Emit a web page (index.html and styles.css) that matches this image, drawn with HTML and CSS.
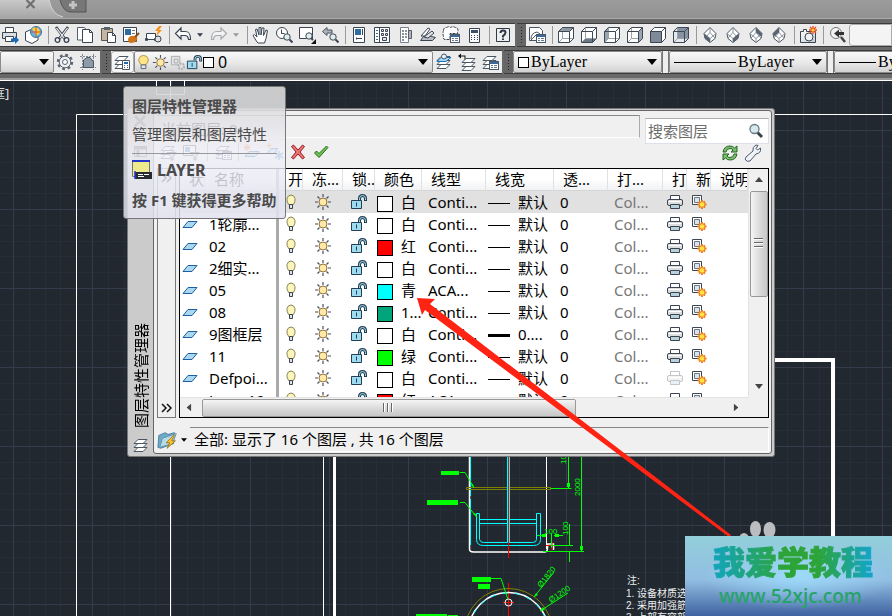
FILE: index.html
```html
<!DOCTYPE html>
<html lang="zh-CN">
<head>
<meta charset="utf-8">
<title>图层特性管理器</title>
<link rel="stylesheet" href="styles.css">
</head>
<body>
<svg class="sprite" aria-hidden="true">
  <defs>
    <linearGradient id="steel" x1="0" y1="0" x2="1" y2="1"><stop offset="0" stop-color="#fff"/><stop offset="1" stop-color="#c3c9d0"/></linearGradient>
    <g id="loupe"><circle cx="12" cy="11" r="3.2" fill="#dfeeed" stroke="#3d4855"/><path d="M14.5 13.5l3 3" stroke="#3d4855" stroke-width="2"/></g>
    <g id="sheets" fill="#fff" stroke="#4b5663"><path d="M2 15.500h9l4-4H6z"/><path d="M2 11.500h9l4-4H6z"/><path d="M2 7.500h9l4-4H6z"/></g>
    <g id="card"><rect x="8.500" y="8.500" width="9" height="8" fill="#fff" stroke="#4b5a6b"/><path d="M9 10h8" stroke="#3d6a9c" stroke-width="2"/><path d="M10 12.500h2m1 0h3m-6 2h2m1 0h3" stroke="#6b7a8a"/></g>
  </defs>
  <symbol id="i-plot" viewBox="0 0 18 18"><path d="M4.500 7V1.500h8V7" fill="#fff" stroke="#3a4452"/><path d="M1.500 6.500h14v6h-14z" fill="#dcdfe2" stroke="#3a4452"/><path d="M4.500 10.500h8v5h-8z" fill="#fff" stroke="#3a4452"/><path d="M10 12.500h4V10l4 4-4 4v-2.500h-4z" fill="#1769b5"/></symbol>
  <symbol id="i-globe" viewBox="0 0 18 18"><path d="M1.500 6L6 4l8 1v9l-6 3.500-6.500-3z" fill="#fff" stroke="#3a4452"/><circle cx="12" cy="6" r="5.500" fill="#63b8e8" stroke="#3a7298"/><path d="M8 3c4-4 8 0 8 4l-4 3c0-4-1-4-4-7z" fill="#f5d33c"/><path d="M12 1v10M7 6h10" stroke="#e04b20"/></symbol>
  <symbol id="i-cut" viewBox="0 0 18 18"><path d="M3 1l9 12M15 1L6 13" stroke="#3a4452" stroke-width="2.800"/><path d="M3.500 2l8 10.500M14.500 2l-8 10.500" stroke="#f5f6f7" stroke-width="1.200"/><circle cx="4.500" cy="14" r="2.300" fill="none" stroke="#3a4452" stroke-width="1.300"/><circle cx="13.500" cy="14" r="2.300" fill="none" stroke="#3a4452" stroke-width="1.300"/></symbol>
  <symbol id="i-copy" viewBox="0 0 18 18"><path d="M1.500 1.500H8L11 4v10H1.500z" fill="#fff" stroke="#555f6b"/><path d="M6.500 3.500h7l3 3v10h-10z" fill="#fff" stroke="#3a4452"/><path d="M13.500 3.500v3h3" fill="none" stroke="#3a4452"/></symbol>
  <symbol id="i-paste" viewBox="0 0 18 18"><path d="M2.500 2.500h11v12h-11z" fill="#c4b5a2" stroke="#5d5753"/><path d="M5 1h6v3H5z" fill="#59636f"/><path d="M8.500 6.500h5l3 3v7h-8z" fill="#fff" stroke="#3a4452"/><path d="M13.500 6.500v3h3" fill="none" stroke="#3a4452"/></symbol>
  <symbol id="i-match" viewBox="0 0 18 18"><path d="M1.500 1.500h13v14h-13z" fill="#fff" stroke="#3a4452"/><path d="M3 3h6v6H3z" fill="#2f6d9f"/><path d="M10 4.500h3M10 7.500h3" stroke="#777"/><path d="M6 13q2-4 6-3l3 1c1 3-2 6-6 6-2 0-3-2-3-4z" fill="#cf7417"/><path d="M13 11l4-4" stroke="#8b4c15" stroke-width="2"/></symbol>
  <symbol id="i-block" viewBox="0 0 18 18"><path d="M1.500 7.500h9v6h-9z" fill="#fff" stroke="#3a4452"/><path d="M0 13.500h3m6 0h3" stroke="#3a4452" stroke-width="2.500"/><circle cx="13" cy="13" r="3" fill="#dce0e4" stroke="#3a4452"/><path d="M14 0l-4 5h3l-2 5 6-6h-3l3-4z" fill="#f7921b"/></symbol>
  <symbol id="i-undo" viewBox="0 0 18 18"><path d="M1.500 7.500L7 2v3.500h4c4 0 5.500 2 5.500 8h-2c-.5-3-1-4-4-4H7V13z" fill="#fff" stroke="#3a4452" stroke-width="1.200"/></symbol>
  <symbol id="i-redo" viewBox="0 0 18 18"><path d="M16.500 7.500L11 2v3.500H7c-4 0-5.500 2-5.500 8h2c.5-3 1-4 4-4H11V13z" fill="#f4f4f4" stroke="#a6a9ad" stroke-width="1.200"/></symbol>
  <symbol id="i-hand" viewBox="0 0 18 18"><path d="M5 16L1 9.500 2.500 8.500 5 11 3.500 3.500 5 3l2 6V1.500h2V9l1-7h2l-.5 7.500L14 4l1.500.5-1.500 8L12.500 17H6z" fill="#fff" stroke="#3a4452"/></symbol>
  <symbol id="i-zoomrt" viewBox="0 0 18 18"><circle cx="7" cy="7" r="5.500" fill="#fff" stroke="#3a4452"/><path d="M6.500 3.500v4h3" fill="none" stroke="#3a4452"/><use href="#loupe"/></symbol>
  <symbol id="i-zoomwin" viewBox="0 0 18 18"><path d="M1.500 1.500h13v11h-13z" fill="#fff" stroke="#3a4452"/><circle cx="11" cy="10" r="3.200" fill="#dfeeed" stroke="#3d4855"/><path d="M13 12l2 2" stroke="#3d4855" stroke-width="2"/><path d="M18 13v5h-5z" fill="#111"/></symbol>
  <symbol id="i-zoomprev" viewBox="0 0 18 18"><path d="M1.500 5.500L6 1.500V4h5v3H6v2.500z" fill="#aeb4ba" stroke="#4b5560"/><use href="#loupe"/></symbol>
  <symbol id="i-props" viewBox="0 0 18 18"><path d="M3.500 1.500h11v15h-11z" fill="#fff" stroke="#3a4452"/><path d="M5 3h6v6H5z" fill="#2f6d9f"/><path d="M12.500 3v6M6 12.500h6m-5.500-1v2" stroke="#3a4452"/></symbol>
  <symbol id="i-dc" viewBox="0 0 18 18"><path d="M1.500 1.500h15v15h-15zM6.500 1.500v15" fill="#fff" stroke="#3a4452"/><path d="M3 4.500h2M3 7.500h2m-2 3h2m-2 3h2" stroke="#2f6d9f"/><path d="M8.500 3.500h2v2h-2zm4 0h2v2h-2zm-4 4h2v2h-2zm4 0h2v2h-2zm-3 4h4v3h-4z" fill="#dfe4e8" stroke="#3a4452"/></symbol>
  <symbol id="i-tp" viewBox="0 0 18 18"><path d="M4.500 1.500h8v15h-8z" fill="#fff" stroke="#7a838d"/><path d="M12.500 4.500h3v8h-3z" fill="#aeb4ba" stroke="#555f6b"/><path d="M6 5h2m1 0h2M6 8h2m1 0h2m-5 3h2m1 0h2m-5 3h2" stroke="#8a929b" stroke-width="2"/></symbol>
  <symbol id="i-ssm" viewBox="0 0 18 18"><path d="M1.500 14.500h12l3-3-4-1-8 0z" fill="#b6bcc2" stroke="#3a4452"/><path d="M2 10L9 2l2 1-5 7z" fill="#fff" stroke="#3a4452"/><path d="M5 11l8-6 2 2-6 5z" fill="#e5e7e9" stroke="#3a4452"/></symbol>
  <symbol id="i-markup" viewBox="0 0 18 18"><path d="M1.500 4.500q0-3 3-3 3-1.500 4 0 3-1.500 4.500 0 3 0 3 3-1 2 0 3H8v6H3q-2 0-1.500-3-1-3 0-6z" fill="#fff" stroke="#3a4452" stroke-dasharray="3 1"/><use href="#card"/></symbol>
  <symbol id="i-calc" viewBox="0 0 18 18"><path d="M4.500 2.500h10v14h-10z" fill="#fff" stroke="#3a4452"/><path d="M6 5.500h7" stroke="#3d5266" stroke-width="3"/><path d="M6 9.500h1m2 0h1m2 0h1M6 11.500h1m2 0h1m2 0h1M6 13.500h1m2 0h1m2 0h1" stroke="#3a4452"/></symbol>
  <symbol id="i-help" viewBox="0 0 18 18"><path d="M2.500 2.500h13v13h-13z" fill="#eceef0" stroke="#2f3945"/><path d="M6.500 7q0-2.500 2.500-2.500t2.500 2Q11.500 8 9 10v1.500m0 1V14" fill="none" stroke="#2f3945" stroke-width="2"/></symbol>
  <symbol id="i-view" viewBox="0 0 18 18"><path d="M1.500 1.500h10l3 3v10h-13z" fill="#fff" stroke="#4b5663"/><path d="M3 13q0-6 6-7l3 2M3 14l5-5" stroke="#4b5663" fill="none"/><use href="#card"/></symbol>
  <symbol id="i-cube" viewBox="0 0 18 18"><path d="M5.500 1.500v11h11m-11 0l-4 4" fill="none" stroke="#9aa2ab"/><path d="M1.500 5.500l4-4h11v11l-4 4h-11zM1.500 5.500h11v11m0-11l4-4" fill="none" stroke="#3f4956"/></symbol>
  <symbol id="i-top" viewBox="0 0 18 18"><path d="M1.500 5.500l4-4h11v11l-4 4h-11z" fill="#fff"/><path d="M1.500 5.500l4-4h11l-4 4z" fill="#8d98a5"/><use href="#i-cube"/></symbol>
  <symbol id="i-bottom" viewBox="0 0 18 18"><path d="M1.500 5.500l4-4h11v11l-4 4h-11z" fill="#fff"/><path d="M1.500 16.500l4-4h11l-4 4z" fill="#6d7885"/><use href="#i-cube"/></symbol>
  <symbol id="i-left" viewBox="0 0 18 18"><path d="M1.500 5.500l4-4h11v11l-4 4h-11z" fill="#fff"/><path d="M1.500 5.500l4-4v11l-4 4z" fill="#9aa4ae"/><use href="#i-cube"/></symbol>
  <symbol id="i-right" viewBox="0 0 18 18"><path d="M1.500 5.500l4-4h11v11l-4 4h-11z" fill="#fff"/><path d="M12.500 5.500l4-4v11l-4 4z" fill="#9aa4ae"/><use href="#i-cube"/></symbol>
  <symbol id="i-front" viewBox="0 0 18 18"><path d="M1.500 5.500l4-4h11v11l-4 4z" fill="#fff" stroke="#3a4452"/><path d="M1.500 5.500h11v11h-11z" fill="#7e8a97" stroke="#3a4452"/><path d="M12.500 5.500l4-4" stroke="#3a4452"/></symbol>
  <symbol id="i-back" viewBox="0 0 18 18"><path d="M1.500 5.500l4-4h11v11l-4 4h-11z" fill="#e6e9ec"/><path d="M5.500 1.500h11v11h-11z" fill="#8793a0"/><use href="#i-cube"/></symbol>
  <symbol id="i-iso" viewBox="0 0 18 18"><path d="M9 1.500l6 6-1 5-5 4-5-4-1-5z" fill="#fff" stroke="#4b5663"/><path d="M3 7.500l6 5 6-5M9 12.500v4M9 1.500v5L4 12m5-5.500l5 5.500" fill="none" stroke="#8b949e"/></symbol>
  <symbol id="i-sw" viewBox="0 0 18 18"><use href="#i-iso"/><path d="M3 7.500l6 5v4l-5-4z" fill="#59636f"/></symbol>
  <symbol id="i-se" viewBox="0 0 18 18"><use href="#i-iso"/><path d="M15 7.500l-6 5v4l5-4z" fill="#59636f"/></symbol>
  <symbol id="i-ne" viewBox="0 0 18 18"><use href="#i-iso"/><path d="M9 1.500l6 6-1 3-5-4z" fill="#59636f"/></symbol>
  <symbol id="i-nw" viewBox="0 0 18 18"><use href="#i-iso"/><path d="M9 1.500l-6 6 1 3 5-4z" fill="#59636f"/></symbol>
  <symbol id="i-camera" viewBox="0 0 18 18"><path d="M1.500 5.500h3v-2h3v2h9v11h-15z" fill="url(#steel)" stroke="#3a4452"/><circle cx="10" cy="11" r="4" fill="#eef2f4" stroke="#3a4452"/><path d="M14 0v8m-4-4h8m-7-3l6 6m0-6l-6 6" stroke="#e8481c" stroke-width="1.300"/><circle cx="14" cy="4" r="1.600" fill="#ffd43a"/></symbol>
  <symbol id="i-find" viewBox="0 0 18 18"><circle cx="8" cy="7" r="5.500" fill="#f3f3f3" stroke="#777"/><path d="M13 11l4 5" stroke="#444" stroke-width="2.500"/><path d="M6 7.500l5-4v2.500h5v3h-5v2.500z" fill="#333"/></symbol>
  <symbol id="i-gear" viewBox="0 0 18 18"><circle cx="9" cy="9" r="7" fill="none" stroke="#5a6571" stroke-width="2.400" stroke-dasharray="2.750 2.750"/><circle cx="9" cy="9" r="5.800" fill="#eef0f2" stroke="#5a6571"/><circle cx="9" cy="9" r="2.500" fill="#fff" stroke="#5a6571"/></symbol>
  <symbol id="i-model" viewBox="0 0 18 18"><path d="M3.500 1v16M14.500 1v16M1 3.500h16M1 14.500h16" stroke="#7c8792" stroke-dasharray="2 1"/><path d="M4.500 7L8 4.500h3L14.500 9v5.500h-10z" fill="#8d9aa7" stroke="#4b5663"/></symbol>
  <symbol id="i-layers" viewBox="0 0 18 18"><use href="#sheets"/></symbol>
  <symbol id="i-layerprop" viewBox="0 0 18 18"><use href="#sheets"/><path d="M9.500 7.500h7v9h-7z" fill="#fff" stroke="#4b5663"/><path d="M11 10h4" stroke="#2468ad" stroke-width="2"/><path d="M11 12.500h1m2 0h1m-4 2h1m2 0h1" stroke="#4b5663"/></symbol>
  <symbol id="i-current" viewBox="0 0 18 18"><use href="#sheets"/><path d="M2 8.500h9l5-4H6z" fill="#a5d8f5" stroke="#1b72b8"/><circle cx="9" cy="3.500" r="2.500" fill="#e4eef2" stroke="#4b5663"/></symbol>
  <symbol id="i-previous" viewBox="0 0 18 18"><g transform="translate(2 2)"><use href="#sheets"/></g><path d="M0 3l3-2.500v2h4.500v4h-1v-3H3v2z" fill="#111"/></symbol>
  <symbol id="i-states" viewBox="0 0 18 18"><use href="#sheets"/><use href="#card"/></symbol>
  <symbol id="i-bulb" viewBox="0 0 18 18"><path d="M6.500 11.500Q4.500 8 5 5.500q1-3.500 4-3.500t4 3.500q.5 2.500-1.500 6z" fill="#fdf6b8" stroke="#8a835c"/><path d="M7.500 11.500h3v4h-3z" fill="#dfe2e5" stroke="#3a4452"/></symbol>
  <symbol id="i-bulb-on" viewBox="0 0 18 18"><path d="M6.500 11.500Q3.500 8 4 5.500q1-4 5-4t5 4q.5 2.500-2.500 6z" fill="#ffe58a" stroke="#b28e3c"/><path d="M6.500 11.500h5v4h-5z" fill="#dfe2e5" stroke="#59636f"/></symbol>
  <symbol id="i-sun" viewBox="0 0 18 18"><path d="M9 1v3m0 10v3M1 9h3m10 0h3M3.500 3.500l2 2m7 7l2 2m0-11l-2 2m-7 7l-2 2" stroke="#46505c" stroke-width="1.200"/><circle cx="9" cy="9" r="4" fill="#ffe9a8" stroke="#92713a"/></symbol>
  <symbol id="i-vp" viewBox="0 0 18 18"><path d="M2.500 2.500h9v9h-9z M5.500 5.500h4v4h-4z" fill="#e4e4e4" stroke="#a8abae"/><circle cx="13" cy="13" r="3" fill="#ddd" stroke="#aeb1b4" stroke-width="2" stroke-dasharray="2 1"/></symbol>
  <symbol id="i-unlock" viewBox="0 0 18 18"><path d="M1.500 7.500h10v8h-10z" fill="#9edcf0" stroke="#243f55"/><path d="M6.500 9.500v4" stroke="#243f55"/><path d="M9.500 7V5.500q0-3 3-3t3 3V8" fill="none" stroke="#243f55" stroke-width="3"/><path d="M9.500 7V5.500q0-3 3-3t3 3v1.500" fill="none" stroke="#a9dff0"/></symbol>
  <symbol id="i-print" viewBox="0 0 18 18"><path d="M4.500 6.500v-4h9v4" fill="#fff" stroke="#3a4452"/><rect x="1.500" y="6.500" width="15" height="6" rx="1.500" fill="#dcdddf" stroke="#3a4452"/><path d="M2.500 8.500h13" stroke="#fff"/><path d="M4.500 11.500h9v4h-9z" fill="#b8d2dc" stroke="#3a4452"/></symbol>
  <symbol id="i-newvp" viewBox="0 0 18 18"><path d="M2.500 2.500h9v9h-9z" fill="#fff" stroke="#3a4452"/><path d="M4.500 4.500h5v5h-5z" fill="#dce3ea" stroke="#6a7682"/><path d="M12 7v9m-4.500-4.500h9M9 8.500l6 6m0-6l-6 6" stroke="#ee7214" stroke-width="1.800"/><circle cx="12" cy="11.500" r="2.800" fill="#ffe34a" stroke="#ee8a1c"/></symbol>
  <symbol id="i-layer" viewBox="0 0 18 18"><path d="M2 12.500h9l5-6H7z" fill="#a9d7f0" stroke="#1e5fa0"/></symbol>
  <symbol id="i-check" viewBox="0 0 18 18"><path d="M2.500 10l2-2L7 10.500 14.500 3 16 4.500 7 14.500z" fill="#6fc355" stroke="#276d1d"/></symbol>
  <symbol id="i-delete" viewBox="0 0 18 18"><path d="M2.500 3.500l2-1.500L9 7l4.500-5 2 1.500L11 9l4.500 5.500-2 1.500L9 11l-4.500 5-2-1.500L7 9z" fill="#f07070" stroke="#8f2228"/></symbol>
  <symbol id="i-filter" viewBox="0 0 18 18"><use href="#sheets"/><path d="M8 9.500h9l-3 4V17h-2v-3.500z" fill="#d6dade" stroke="#3a4452"/></symbol>
  <symbol id="i-group" viewBox="0 0 18 18"><path d="M1.500 2.500h12v10h-12z" fill="#fff" stroke="#3a4452"/><path d="M3 4h5v5H3z" fill="#3b83bd"/><path d="M8 9.500h9l-3 4V17h-2v-3.500z" fill="#d6dade" stroke="#3a4452"/></symbol>
  <symbol id="i-newlayer" viewBox="0 0 18 18"><path d="M2 13.500h10l4-5H6z" fill="#a9d7f0" stroke="#1e5fa0"/><path d="M4 1v7M.5 4.500h7M1.500 2l5 5m0-5l-5 5" stroke="#ee7214"/></symbol>
  <symbol id="i-frozen" viewBox="0 0 18 18"><path d="M1 10.500h7l4-5H5z" fill="#a9d7f0" stroke="#1e5fa0"/><path d="M3 0v5M.5 2.500h5" stroke="#ee7214"/><path d="M13 8v9m-4-7l8 5m0-5l-8 5" stroke="#3b83bd" stroke-width="1.500"/></symbol>
  <symbol id="i-refresh" viewBox="0 0 18 18"><path d="M2 8q1-6 7-6 3 0 4.500 2L16 2v6h-6l2-2q-1-1.500-3-1.500-3.500 0-4 3.500zM16 10q-1 6-7 6-3 0-4.500-2L2 16v-6h6l-2 2q1 1.500 3 1.500 3.500 0 4-3.500z" fill="#7dbd72" stroke="#20671f"/></symbol>
  <symbol id="i-wrench" viewBox="0 0 18 18"><path d="M2 13l7-6q-1-4 3-6l2 .5-2 3 1.500 1.500 3-2q1 5-4.500 6l-6 7Q3 18 1.500 16 1 14.500 2 13z" fill="#f0f3f6" stroke="#4a5870"/></symbol>
  <symbol id="i-search" viewBox="0 0 18 18"><path d="M10 10l5 5" stroke="#39414a" stroke-width="3"/><circle cx="7.500" cy="7" r="4.500" fill="#d5e9ee" stroke="#6b7a84" stroke-width="1.300"/></symbol>
  <symbol id="i-folder" viewBox="0 0 24 20"><path d="M2 5l7-3 3 2 7-2-1 12-14 5-3-1z" fill="#6fa9c6" stroke="#467d9c"/><path d="M3 18L6 8l15-5-4 11z" fill="#b9dbe8" stroke="#5f93ad"/><path d="M18 5l-8 8h4l-3 6 9-8h-4l3-6z" fill="#ffc928" stroke="#9b7421"/></symbol>
  <symbol id="i-close" viewBox="0 0 18 18"><path d="M4 4l10 10M14 4L4 14" stroke="#555" stroke-width="2.500"/></symbol>
  <symbol id="i-pin" viewBox="0 0 18 18"><path d="M3.500 4.500h12v10h-12z" fill="#ccc" stroke="#555"/><path d="M3 6h13M7 8v6" stroke="#555" stroke-width="3"/></symbol>
  <symbol id="i-command" viewBox="0 0 20 20"><path d="M.5 1.500h17v15H.5z" fill="#eeeb8c" stroke="#777"/><path d="M0 1h18" stroke="#2335c8" stroke-width="2"/><path d="M3 12h17v7H3z" fill="#262a31"/><path d="M3 11v8" stroke="#2335c8" stroke-width="1.500"/><path d="M6 14.500h5m1 0h5m-11 2h6" stroke="#fff"/></symbol>
  <symbol id="i-down" viewBox="0 0 10 6"><path d="M0 0h10L5 6z"/></symbol>
</svg>

<header class="tabs">
  <svg class="tab-shape" viewBox="0 0 100 18" aria-hidden="true">
    <defs><linearGradient id="tab" x1="0" y1="0" x2="0" y2="1"><stop offset="0" stop-color="#c9c9c9"/><stop offset="1" stop-color="#a5a5a5"/></linearGradient></defs>
    <path d="M0 0h49q3 15 14 18H0z" fill="url(#tab)"/><path d="M49 0q3 15 14 17" fill="none" stroke="#d8d8d8"/>
    <path d="M60 0q3 12 11 12h15V0" fill="#777" stroke="#555"/>
    <path d="M26.500 0l8 8m0-8l-8 8" stroke="#707070" stroke-width="2.200"/>
    <path d="M73 1v8m-4-4h8" stroke="#c4c4c4" stroke-width="3"/>
  </svg>
</header>

<div class="bars">
  <div class="bar-row">
    <div class="bar first">
      <button class="tool" aria-label="打印"><svg><use href="#i-plot"/></svg></button>
      <button class="tool" aria-label="发布"><svg><use href="#i-globe"/></svg></button>
      <i class="sep"></i>
      <button class="tool" aria-label="剪切"><svg><use href="#i-cut"/></svg></button>
      <button class="tool" aria-label="复制"><svg><use href="#i-copy"/></svg></button>
      <button class="tool" aria-label="粘贴"><svg><use href="#i-paste"/></svg></button>
      <button class="tool" aria-label="特性匹配"><svg><use href="#i-match"/></svg></button>
      <button class="tool" aria-label="块编辑器"><svg><use href="#i-block"/></svg></button>
      <i class="sep"></i>
      <button class="tool" aria-label="放弃"><svg><use href="#i-undo"/></svg></button>
      <button class="tool drop" aria-label="放弃列表"><svg><use href="#i-down"/></svg></button>
      <button class="tool" aria-label="重做"><svg><use href="#i-redo"/></svg></button>
      <button class="tool drop faint" aria-label="重做列表"><svg><use href="#i-down"/></svg></button>
      <i class="sep"></i>
      <button class="tool" aria-label="平移"><svg><use href="#i-hand"/></svg></button>
      <button class="tool" aria-label="实时缩放"><svg><use href="#i-zoomrt"/></svg></button>
      <button class="tool" aria-label="窗口缩放"><svg><use href="#i-zoomwin"/></svg></button>
      <button class="tool" aria-label="缩放上一个"><svg><use href="#i-zoomprev"/></svg></button>
      <i class="sep"></i>
      <button class="tool" aria-label="特性"><svg><use href="#i-props"/></svg></button>
      <button class="tool" aria-label="设计中心"><svg><use href="#i-dc"/></svg></button>
      <button class="tool" aria-label="工具选项板"><svg><use href="#i-tp"/></svg></button>
      <button class="tool" aria-label="图纸集管理器"><svg><use href="#i-ssm"/></svg></button>
      <button class="tool" aria-label="标记集管理器"><svg><use href="#i-markup"/></svg></button>
      <button class="tool" aria-label="快速计算器"><svg><use href="#i-calc"/></svg></button>
      <i class="sep"></i>
      <button class="tool" aria-label="帮助"><svg><use href="#i-help"/></svg></button>
    </div>
    <div class="bar grow">
      <i class="grip"></i>
      <button class="tool" aria-label="命名视图"><svg><use href="#i-view"/></svg></button>
      <i class="sep"></i>
      <button class="tool" aria-label="俯视"><svg><use href="#i-top"/></svg></button>
      <button class="tool" aria-label="仰视"><svg><use href="#i-bottom"/></svg></button>
      <button class="tool" aria-label="左视"><svg><use href="#i-left"/></svg></button>
      <button class="tool" aria-label="右视"><svg><use href="#i-right"/></svg></button>
      <button class="tool" aria-label="前视"><svg><use href="#i-front"/></svg></button>
      <button class="tool" aria-label="后视"><svg><use href="#i-back"/></svg></button>
      <i class="sep"></i>
      <button class="tool" aria-label="西南等轴测"><svg><use href="#i-sw"/></svg></button>
      <button class="tool" aria-label="东南等轴测"><svg><use href="#i-se"/></svg></button>
      <button class="tool" aria-label="东北等轴测"><svg><use href="#i-ne"/></svg></button>
      <button class="tool" aria-label="西北等轴测"><svg><use href="#i-nw"/></svg></button>
      <i class="sep"></i>
      <button class="tool" aria-label="创建相机"><svg><use href="#i-camera"/></svg></button>
      <i class="sep"></i>
      <button class="tool" aria-label="上一个视图"><svg><use href="#i-find"/></svg></button>
      <input class="view-name" type="text" aria-label="视图名称">
    </div>
  </div>

  <div class="bar-row">
    <div class="bar">
      <div class="combo workspace"><select aria-label="工作空间"><option></option></select><svg class="arrow"><use href="#i-down"/></svg></div>
      <button class="tool" aria-label="工作空间设置"><svg><use href="#i-gear"/></svg></button>
      <button class="tool" aria-label="我的工作空间"><svg><use href="#i-model"/></svg></button>
    </div>
    <div class="bar">
      <i class="grip"></i>
      <button class="tool raised" aria-label="图层特性管理器"><svg><use href="#i-layerprop"/></svg></button>
      <div class="combo layer">
        <svg class="state"><use href="#i-bulb-on"/></svg><svg class="state"><use href="#i-sun"/></svg><svg class="state"><use href="#i-vp"/></svg><svg class="state"><use href="#i-unlock"/></svg><i class="box"></i>
        <select aria-label="图层"><option>0</option></select><svg class="arrow"><use href="#i-down"/></svg>
      </div>
      <button class="tool" aria-label="置为当前"><svg><use href="#i-current"/></svg></button>
      <button class="tool" aria-label="上一个图层"><svg><use href="#i-previous"/></svg></button>
      <button class="tool" aria-label="图层状态"><svg><use href="#i-states"/></svg></button>
    </div>
    <div class="bar grow">
      <i class="grip"></i>
      <div class="combo serif color"><i class="box"></i><select aria-label="颜色"><option>ByLayer</option></select><svg class="arrow"><use href="#i-down"/></svg></div>
      <i class="split"></i>
      <div class="combo serif linetype"><i class="rule"></i><select aria-label="线型"><option>ByLayer</option></select><svg class="arrow"><use href="#i-down"/></svg></div>
      <i class="split"></i>
      <div class="combo serif weight"><i class="rule"></i><select aria-label="线宽"><option>ByLayer</option></select></div>
    </div>
  </div>
</div>

<main class="canvas">
  <svg class="drawing" viewBox="0 81 892 535" preserveAspectRatio="xMinYMin slice" aria-hidden="true">
    <defs>
      <pattern id="grid" x="13" y="130" width="79" height="79" patternUnits="userSpaceOnUse">
        <path d="M16.500 0v79M32.500 0v79M47.500 0v79M63.500 0v79M0 16.500h79M0 32.500h79M0 47.500h79M0 63.500h79" stroke="#262e39"/>
        <path d="M.5 0v79M0 .5h79" stroke="#343c4b"/>
      </pattern>
    </defs>
    <rect y="81" width="892" height="535" fill="url(#grid)"/>
    <g fill="none" stroke="#fff">
      <path d="M76.500 616V114.500H892M170.500 81v535M323.500 450v166M156.500 81v13.500h28V81"/>
      <path d="M334.500 450v166" stroke-width="3"/>
      <path d="M770 360h63v256" stroke-width="4"/>
    </g>
    <text x="-8" y="98" class="cad-label">框]</text>
    <g fill="none">
      <path d="M469.500 450v99q0 3 4 3h71q3 0 3-4v-4h6v6" stroke="#fff" stroke-width="1.500"/>
      <path d="M546.500 450v99" stroke="#fff"/>
      <path d="M470.500 450v98" stroke="#00ffff" stroke-dasharray="46 3"/>
      <path d="M466.500 487.500h84v2h-84z" stroke="#808000"/>
      <path d="M507.500 450v92m2-92v92M476.500 513.500h3v26q1 3 4 3h49q4 0 4-3v-26h4v26q0 6-7 6h-50q-7 0-7-6zM479.500 519.500h57m-57 4h57" stroke="#00ffff"/>
      <path d="M508.500 450v108M508.500 583v33M546 545.500h9m-3-4v9M503 602.500h11" stroke="#f00"/>
      <circle cx="508.500" cy="632.500" r="44" stroke="#808000"/>
      <circle cx="508.500" cy="632.500" r="40" stroke="#fff" stroke-width="1.500"/>
      <circle cx="508.500" cy="632.500" r="39.500" stroke="#00ffff" stroke-dasharray="5 7"/>
      <circle cx="508.500" cy="602.500" r="3.500" stroke="#fff"/>
      <path d="M568.500 450v38m-18 0.500h21M581.500 450v101M543 551.500h41M552 545.500h21M569.500 524v22m0 6v10M537 535.500h7m10 0h9m-11.500-2v14M460 472.500h5l9 15M460 502.500h5l12 15M491 578.500h10l7 21M534 597l20-25M540 611l28-18" stroke="#0f0"/>
    </g>
    <path d="M441 471h18v4h-18zM427 500h31v5h-31zM472 577h19v5h-19zM478 584h12v5h-12zM416 614h31v3h-31zM448 615h10v2h-10zM567 483h3v4h-3zM580 546h3v4h-3zM542 534h4v3h-4zM555 534h4v3h-4zM534 597l4-2-2-2zM540 611l5-1-2-3zM474 488l-3-3 2-1zM477 517l-4-3 2-1z" fill="#0f0"/>
    <g class="cad-dim">
      <text transform="translate(580 496) rotate(-90)">2000</text>
      <text transform="translate(566 464) rotate(-90)">10</text>
      <text transform="translate(568 535) rotate(-90)">100</text>
      <text x="544" y="534">100</text>
      <text transform="translate(541 588) rotate(-51)">Ø1820</text>
      <text transform="translate(551 603) rotate(-34)">Ø1200</text>
    </g>
    <g class="cad-note">
      <text x="627" y="584">注:</text><text x="626" y="597">1. 设备材质选用</text><text x="626" y="609">2. 采用加强筋</text><text x="626" y="621">3. 上部有容部</text>
    </g>
  </svg>

  <section class="palette" aria-label="图层特性管理器">
    <div class="spine">
      <button class="tool" aria-label="关闭"><svg><use href="#i-close"/></svg></button>
      <button class="tool" aria-label="自动隐藏"><svg><use href="#i-pin"/></svg></button>
      <h1>图层特性管理器</h1>
      <svg class="spine-icon"><use href="#i-layers"/></svg>
    </div>
    <div class="pane">
      <div class="head">
        <div class="head-left">
          <p class="current">当前图层: 0</p>
          <div class="tools">
            <button class="tool" aria-label="新建特性过滤器"><svg><use href="#i-filter"/></svg></button>
            <button class="tool" aria-label="新建组过滤器"><svg><use href="#i-group"/></svg></button>
            <i class="sep wide"></i>
            <button class="tool" aria-label="图层状态管理器"><svg><use href="#i-states"/></svg></button>
            <i class="sep"></i>
            <button class="tool" aria-label="新建图层"><svg><use href="#i-newlayer"/></svg></button>
            <button class="tool" aria-label="新建冻结图层"><svg><use href="#i-frozen"/></svg></button>
            <button class="tool" aria-label="删除图层"><svg><use href="#i-delete"/></svg></button>
            <button class="tool" aria-label="置为当前"><svg><use href="#i-check"/></svg></button>
          </div>
        </div>
        <div class="head-right">
          <label class="search"><input type="text" placeholder="搜索图层" aria-label="搜索图层"><svg><use href="#i-search"/></svg></label>
          <div class="tools end">
            <button class="tool" aria-label="刷新"><svg><use href="#i-refresh"/></svg></button>
            <button class="tool" aria-label="设置"><svg><use href="#i-wrench"/></svg></button>
          </div>
        </div>
      </div>

      <div class="body">
        <div class="filters">
          <button class="expand" aria-label="展开过滤器树"><svg viewBox="0 0 12 10"><path d="M1 1l4 4-4 4M6 1l4 4-4 4" fill="none" stroke="#111" stroke-width="1.500"/></svg></button>
          <button class="expand" aria-label="展开"><svg viewBox="0 0 12 10"><path d="M1 1l4 4-4 4M6 1l4 4-4 4" fill="none" stroke="#111" stroke-width="1.500"/></svg></button>
        </div>
        <div class="list">
          <div class="viewport">
            <table>
              <colgroup><col class="c-state"><col class="c-name"><col class="c-on"><col class="c-freeze"><col class="c-lock"><col class="c-color"><col class="c-type"><col class="c-weight"><col class="c-trans"><col class="c-style"><col class="c-plot"><col class="c-new"><col class="c-desc"></colgroup>
              <thead><tr><th>状</th><th class="name">名称</th><th>开</th><th>冻...</th><th>锁..</th><th>颜色</th><th>线型</th><th>线宽</th><th>透...</th><th>打...</th><th>打</th><th>新</th><th>说明</th></tr></thead>
              <tbody>
                <tr class="selected"><td><svg><use href="#i-check"/></svg></td><td class="name">0</td><td class="mid"><svg><use href="#i-bulb"/></svg></td><td class="mid"><svg><use href="#i-sun"/></svg></td><td class="mid"><svg><use href="#i-unlock"/></svg></td><td><i class="swatch white"></i>白</td><td class="txt">Conti...</td><td><i class="line"></i>默认</td><td class="txt">0</td><td class="txt dim">Col...</td><td class="mid"><svg><use href="#i-print"/></svg></td><td class="mid"><svg><use href="#i-newvp"/></svg></td><td></td></tr>
                <tr><td><svg><use href="#i-layer"/></svg></td><td class="name">1轮廓...</td><td class="mid"><svg><use href="#i-bulb"/></svg></td><td class="mid"><svg><use href="#i-sun"/></svg></td><td class="mid"><svg><use href="#i-unlock"/></svg></td><td><i class="swatch white"></i>白</td><td class="txt">Conti...</td><td><i class="line"></i>默认</td><td class="txt">0</td><td class="txt dim">Col...</td><td class="mid"><svg><use href="#i-print"/></svg></td><td class="mid"><svg><use href="#i-newvp"/></svg></td><td></td></tr>
                <tr><td><svg><use href="#i-layer"/></svg></td><td class="name">02</td><td class="mid"><svg><use href="#i-bulb"/></svg></td><td class="mid"><svg><use href="#i-sun"/></svg></td><td class="mid"><svg><use href="#i-unlock"/></svg></td><td><i class="swatch red"></i>红</td><td class="txt">Conti...</td><td><i class="line"></i>默认</td><td class="txt">0</td><td class="txt dim">Col...</td><td class="mid"><svg><use href="#i-print"/></svg></td><td class="mid"><svg><use href="#i-newvp"/></svg></td><td></td></tr>
                <tr><td><svg><use href="#i-layer"/></svg></td><td class="name">2细实...</td><td class="mid"><svg><use href="#i-bulb"/></svg></td><td class="mid"><svg><use href="#i-sun"/></svg></td><td class="mid"><svg><use href="#i-unlock"/></svg></td><td><i class="swatch white"></i>白</td><td class="txt">Conti...</td><td><i class="line"></i>默认</td><td class="txt">0</td><td class="txt dim">Col...</td><td class="mid"><svg><use href="#i-print"/></svg></td><td class="mid"><svg><use href="#i-newvp"/></svg></td><td></td></tr>
                <tr><td><svg><use href="#i-layer"/></svg></td><td class="name">05</td><td class="mid"><svg><use href="#i-bulb"/></svg></td><td class="mid"><svg><use href="#i-sun"/></svg></td><td class="mid"><svg><use href="#i-unlock"/></svg></td><td><i class="swatch cyan"></i>青</td><td class="txt">ACA...</td><td><i class="line"></i>默认</td><td class="txt">0</td><td class="txt dim">Col...</td><td class="mid"><svg><use href="#i-print"/></svg></td><td class="mid"><svg><use href="#i-newvp"/></svg></td><td></td></tr>
                <tr><td><svg><use href="#i-layer"/></svg></td><td class="name">08</td><td class="mid"><svg><use href="#i-bulb"/></svg></td><td class="mid"><svg><use href="#i-sun"/></svg></td><td class="mid"><svg><use href="#i-unlock"/></svg></td><td><i class="swatch teal"></i>1...</td><td class="txt">Conti...</td><td><i class="line"></i>默认</td><td class="txt">0</td><td class="txt dim">Col...</td><td class="mid"><svg><use href="#i-print"/></svg></td><td class="mid"><svg><use href="#i-newvp"/></svg></td><td></td></tr>
                <tr><td><svg><use href="#i-layer"/></svg></td><td class="name">9图框层</td><td class="mid"><svg><use href="#i-bulb"/></svg></td><td class="mid"><svg><use href="#i-sun"/></svg></td><td class="mid"><svg><use href="#i-unlock"/></svg></td><td><i class="swatch white"></i>白</td><td class="txt">Conti...</td><td><i class="line thick"></i>0....</td><td class="txt">0</td><td class="txt dim">Col...</td><td class="mid"><svg><use href="#i-print"/></svg></td><td class="mid"><svg><use href="#i-newvp"/></svg></td><td></td></tr>
                <tr><td><svg><use href="#i-layer"/></svg></td><td class="name">11</td><td class="mid"><svg><use href="#i-bulb"/></svg></td><td class="mid"><svg><use href="#i-sun"/></svg></td><td class="mid"><svg><use href="#i-unlock"/></svg></td><td><i class="swatch green"></i>绿</td><td class="txt">Conti...</td><td><i class="line"></i>默认</td><td class="txt">0</td><td class="txt dim">Col...</td><td class="mid"><svg><use href="#i-print"/></svg></td><td class="mid"><svg><use href="#i-newvp"/></svg></td><td></td></tr>
                <tr><td><svg><use href="#i-layer"/></svg></td><td class="name">Defpoi...</td><td class="mid"><svg><use href="#i-bulb"/></svg></td><td class="mid"><svg><use href="#i-sun"/></svg></td><td class="mid"><svg><use href="#i-unlock"/></svg></td><td><i class="swatch white"></i>白</td><td class="txt">Conti...</td><td><i class="line"></i>默认</td><td class="txt">0</td><td class="txt dim">Col...</td><td class="mid off"><svg><use href="#i-print"/></svg></td><td class="mid"><svg><use href="#i-newvp"/></svg></td><td></td></tr>
                <tr><td><svg><use href="#i-layer"/></svg></td><td class="name">Layer10</td><td class="mid"><svg><use href="#i-bulb"/></svg></td><td class="mid"><svg><use href="#i-sun"/></svg></td><td class="mid"><svg><use href="#i-unlock"/></svg></td><td><i class="swatch red"></i>红</td><td class="txt">ACA...</td><td><i class="line"></i>默认</td><td class="txt">0</td><td class="txt dim">Col...</td><td class="mid"><svg><use href="#i-print"/></svg></td><td class="mid"><svg><use href="#i-newvp"/></svg></td><td></td></tr>
              </tbody>
            </table>
          </div>
          <div class="vbar"><svg class="cap up"><use href="#i-down"/></svg><div class="thumb"></div><svg class="cap"><use href="#i-down"/></svg></div>
          <div class="hbar"><svg class="cap left"><use href="#i-down"/></svg><div class="thumb"></div><svg class="cap right"><use href="#i-down"/></svg></div>
        </div>
      </div>

      <div class="status">
        <button class="reconcile" aria-label="图层通知"><svg class="folder"><use href="#i-folder"/></svg><svg class="tiny"><use href="#i-down"/></svg></button>
        <p>全部: 显示了 16 个图层 , 共 16 个图层</p>
      </div>
    </div>
  </section>

  <aside class="tip" role="tooltip">
    <strong>图层特性管理器</strong>
    <p>管理图层和图层特性</p>
    <div class="command"><svg><use href="#i-command"/></svg>LAYER</div>
    <b>按 F1 键获得更多帮助</b>
  </aside>

  <svg class="pointer" viewBox="0 81 892 535" preserveAspectRatio="xMinYMin slice" aria-hidden="true">
    <path d="M417 298l18 1-5 5 301 231-2 2L425 310l-3 5z" fill="#ff2314"/>
    <g fill="#bcbdc0"><ellipse cx="755.500" cy="529" rx="5.500" ry="8"/><ellipse cx="769.500" cy="530" rx="6" ry="8"/><ellipse cx="744" cy="539" rx="5" ry="6"/></g>
  </svg>

  <div class="brand"><strong>我爱学教程</strong><a href="#top">www.52xjc.com</a></div>
</main>
</body>
</html>
```
FILE: styles.css
```css
* { box-sizing: border-box; }

body {
  margin: 0;
  min-height: 100vh;
  display: flex;
  flex-direction: column;
  overflow: hidden;
  font: 15px/20px "Noto Sans", "Noto Sans CJK SC", sans-serif;
  color: #000;
  background: #212830;
}

p, h1 { margin: 0; }
i { font-style: normal; flex: none; }
button { margin: 0; padding: 0; border: 0; background: none; font: inherit; }
select, input { margin: 0; border: 0; background: none; font: inherit; color: inherit; outline: 0; min-width: 0; }
.sprite { position: absolute; width: 0; height: 0; }

/* Document tabs */
.tabs { height: 19px; background: linear-gradient(#9c9c9c, #929292); border-bottom: 1px solid #aaa; }
.tab-shape { display: block; width: 100px; height: 18px; }

/* Toolbars */
.bars {
  display: grid;
  gap: 3px;
  padding: 4px 0;
  background: #696969;
  border-bottom: 1px solid #fff;
  box-shadow: inset 0 -2px #999;
  height: 62px;
  align-content: start;
}
.bar-row { display: flex; gap: 2px; min-width: 0; overflow: hidden; }
.bar {
  display: flex;
  align-items: center;
  flex: none;
  height: 24px;
  background: #ebebeb;
  border: solid #3c3c3c;
  border-width: 1px 0;
}
.bar.first { margin-left: -1px; }
.bar.grow { flex: 1; min-width: 0; overflow: hidden; }
.tool { flex: none; width: 23px; height: 22px; padding-left: 2px; display: grid; align-items: center; justify-items: start; }
.tool svg { width: 18px; height: 18px; }
.drop { width: 13px; }
.tool.drop svg { width: 6px; height: 4px; fill: #333d49; }
.tool.faint svg { fill: #999; }
.sep { width: 6px; height: 18px; background: linear-gradient(#999, #999) center / 1px 100% no-repeat; }
.wide { width: 9px; }
.grip { align-self: stretch; width: 9px; background: radial-gradient(#222 35%, transparent 40%) 1px 3px / 3px 3px #666; border: solid #666; border-width: 2px; }
.split { align-self: stretch; width: 7px; border: solid #777; border-width: 0 1px; background: #eee; }
.tool.raised { padding-left: 1px; border: 1px solid #aaa; border-radius: 3px; background: #f6f6f6; }
.view-name { flex: 1; align-self: stretch; background: #f4f4f4; border: 1px solid #aaa; border-radius: 3px 0 0 3px; }

.combo {
  flex: none;
  display: flex;
  align-items: center;
  height: 22px;
  padding: 0 4px;
  border: 1px solid #8a8a8a;
  border-radius: 2px;
  background: linear-gradient(#fafafa, #e6e6e6 60%, #d2d2d2);
}
.combo select { flex: 1; appearance: none; padding: 0 2px; height: 20px; line-height: 20px; font-size: 16px; }
.combo .arrow { flex: none; width: 10px; height: 6px; }
.combo .box { width: 11px; height: 11px; border: 1px solid #000; background: #fff; }
.layer { width: 299px; }
.combo.layer { padding-left: 0; }
.layer select { padding-left: 4px; }
.state { flex: none; width: 17px; height: 17px; }
.serif { font-family: "Liberation Serif", serif; }
.workspace { width: 54px; }
.color { width: 149px; }
.linetype { width: 158px; }
.weight { flex: 1; }
.rule { height: 1px; background: #000; }
.linetype .rule { width: 62px; }
.weight .rule { width: 37px; }

/* Drawing area */
.canvas { position: relative; flex: 1; min-height: 480px; background: #212830; overflow: hidden; }
.drawing, .pointer { position: absolute; inset: 0; width: 100%; height: 100%; pointer-events: none; }
.cad-label { font-size: 13px; fill: #ddd; }
.cad-dim { font: 8px "Liberation Sans", sans-serif; fill: #0f0; }
.cad-note { font: 10px "Liberation Sans", "Noto Sans CJK SC", sans-serif; fill: #eee; }

/* Floating layer palette */
.palette {
  position: absolute;
  left: 127px;
  top: 27px;
  width: 648px;
  display: grid;
  grid-template-columns: 25px 1fr;
  padding: 1px 2px 2px 0;
  border: 1px solid #777;
  border-radius: 3px;
  background: #cbcbcb;
}
.spine { display: flex; flex-direction: column; align-items: center; gap: 8px; }
.spine h1 { flex: 1; text-align: left; writing-mode: vertical-rl; text-orientation: sideways; transform: rotate(180deg); font-size: 15px; line-height: 24px; font-weight: 400; }
.spine-icon { width: 18px; height: 18px; }
.pane { min-width: 0; padding: 4px 2px 1px 3px; border: 1px solid #666; border-radius: 3px; background: #f0f0f0; }

.head { display: flex; gap: 5px; height: 53px; }
.head-left { flex: 1; min-width: 0; }
.current { height: 23px; padding: 0 4px; line-height: 26px; border: solid #aaa; border-width: 1px 1px 1px 0; border-top-color: #888; border-bottom-color: #fff; }
.tools { display: flex; align-items: center; height: 28px; }
.head-right { width: 124px; padding-top: 3px; }
.search { display: flex; align-items: center; height: 26px; padding: 0 3px 0 2px; background: #fff; border: 1px solid #dde0ea; border-top-color: #abadb3; }
.search input { flex: 1; padding: 0; }
.search input::placeholder { color: #6d6d6d; opacity: 1; }
.search svg { width: 18px; height: 18px; }
.tools.end { justify-content: flex-end; height: 18px; padding-right: 4px; }

.body { display: flex; gap: 3px; }
.filters { width: 19px; display: flex; flex-direction: column; justify-content: space-between; padding: 0; border: 1px solid #777; background: #f0f0f0; }
.expand { height: 18px; display: grid; place-items: center; }
.expand svg { width: 12px; height: 10px; }
.list { flex: 1; min-width: 0; display: grid; grid-template: 228px 20px / 1fr 20px; border: 1px solid #000; background: #f0f0f0; }
.viewport { overflow: hidden; background: #fff; }

table { width: 100%; table-layout: fixed; border-collapse: separate; border-spacing: 0; }
th, td { padding: 0; overflow: hidden; white-space: nowrap; text-align: left; font-weight: 400; vertical-align: middle; }
th { height: 22px; padding-left: 9px; background: linear-gradient(#fff 45%, #f1f2f4); border-right: 1px solid #e0e1e4; border-bottom: 1px solid #d5d5d5; line-height: 21px; }
td { height: 22px; line-height: 22px; padding-left: 1px; }
td svg { display: block; width: 18px; height: 18px; }
.mid svg { margin: 0 auto; }
td.mid { padding: 0; }
td.txt { padding-left: 6px; }
.dim { color: #777; }
.name { border-right: 3px solid #aaa; }
td.name { padding-left: 4px; }
.off { opacity: .3; }
.selected { background: #e1e1e1; }
.c-state { width: 25px; }
.c-name { width: 74px; }
.c-on { width: 24px; }
.c-freeze { width: 40px; }
.c-lock { width: 32px; }
.c-color { width: 47px; }
.c-type { width: 64px; }
.c-weight { width: 68px; }
.c-trans { width: 54px; }
.c-style { width: 55px; }
.c-plot { width: 24px; }
.c-new { width: 24px; }

.swatch, .line { display: inline-block; vertical-align: middle; margin: 0 8px 0 1px; }
.swatch { width: 16px; height: 16px; border: 1px solid #000; }
.white { background: #fff; }
.red { background: #f00; }
.cyan { background: #0ff; }
.teal { background: #00a57c; }
.green { background: #0f0; }
.line { width: 22px; height: 1px; background: #000; }
.thick { height: 3px; }

.vbar, .hbar { display: flex; align-items: center; background: #f0f0f0; }
.vbar { flex-direction: column; padding: 8px 0; border-left: 1px solid #e3e3e3; }
.vbar .cap { margin-bottom: auto; }
.vbar .cap.up { margin-bottom: 9px; }
.vbar .thumb { flex: none; width: 18px; height: 106px; margin-bottom: auto; background: repeating-linear-gradient(#666 0 1px, #fff 1px 2px, transparent 2px 4px) center / 9px 12px no-repeat, linear-gradient(90deg, #f5f5f5, #dcdcdc 50%, #c8c8c8); }
.vbar .cap:last-child { margin-bottom: 0; }
.thumb { border: 1px solid #989898; border-radius: 2px; }
.hbar { padding: 0 8px 0 5px; border-top: 1px solid #e3e3e3; }
.hbar .thumb { width: 374px; height: 18px; margin: 0 auto 0 9px; background: repeating-linear-gradient(90deg, #666 0 1px, #fff 1px 2px, transparent 2px 4px) center / 12px 9px no-repeat, linear-gradient(#f5f5f5, #dcdcdc 50%, #c8c8c8); }
.cap { flex: none; width: 8px; height: 5px; fill: #444; }
.up { transform: rotate(180deg); }
.left { transform: rotate(90deg); }
.right { transform: rotate(-90deg); }

.status { display: flex; gap: 3px; padding-top: 9px; }
.reconcile { width: 30px; height: 25px; display: flex; align-items: center; gap: 2px; }
.folder { width: 22px; height: 20px; }
.tiny { width: 6px; height: 4px; }
.status p { flex: 1; padding-left: 4px; height: 25px; line-height: 23px; border: 1px solid #fff; border-top-color: #888; border-left: 0; }

/* Tooltip */
.tip {
  position: absolute;
  left: 123px;
  top: 5px;
  width: 163px;
  padding: 9px 8px 8px;
  border: 1px solid #777;
  border-radius: 3px;
  color: #4a4a4a;
  background: linear-gradient(rgba(214, 214, 214, .93), rgba(240, 240, 248, .8) 50%, rgba(226, 226, 240, .86));
  white-space: nowrap;
}
.tip strong, .tip b { display: block; line-height: 20px; }
.tip p { margin-top: 8px; padding-bottom: 9px; line-height: 20px; border-bottom: 1px solid #999; }
.command { display: flex; align-items: center; gap: 5px; height: 20px; margin: 6px 0 10px; font-size: 16px; font-weight: 700; }
.command svg { width: 20px; height: 20px; }

/* Site badge */
.brand {
  position: absolute;
  right: 0;
  bottom: 0;
  width: 207px;
  height: 80px;
  padding: 9px 0 0 28px;
  background: radial-gradient(ellipse at 55% 50%, rgba(160, 225, 255, .8), transparent 60%), linear-gradient(#93cfdb, #91bde2 55%, #3f62a0);
}
.brand strong { display: block; width: 160px; font-size: 32px; line-height: 34px; font-weight: 900; color: transparent; background: linear-gradient(90deg, #12a5bd, #2da437 45%, #2da437 65%, #12a5cd); background-clip: text; -webkit-text-stroke: 1px transparent; }
.brand a { display: block; padding-left: 6px; font: 600 19px/34px "Open Sans", sans-serif; color: #27a36a; text-decoration: none; }
```
